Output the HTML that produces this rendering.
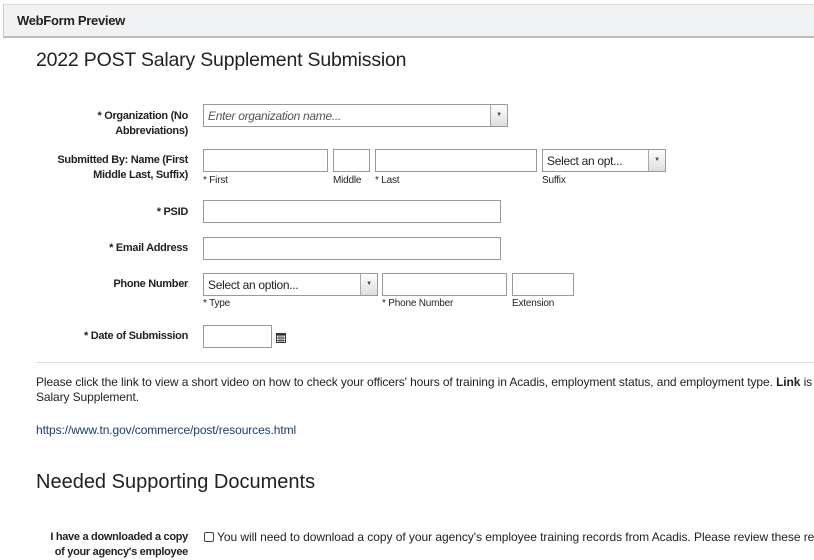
<!DOCTYPE html>
<html><head><meta charset="utf-8">
<style>
*{margin:0;padding:0;box-sizing:border-box}
body{width:814px;height:551px;overflow:hidden;background:#fff;font-family:"Liberation Sans",sans-serif;color:#222;position:relative}
.a{position:absolute;white-space:nowrap}
.hdr{position:absolute;left:3px;top:4px;width:811px;height:34px;background:#f1f2f4;border-top:1px solid #ddd;border-left:1px solid #ccc;border-bottom:2px solid #b9bcc0}
.lbl{position:absolute;font-size:11px;font-weight:bold;text-align:right;right:626px;line-height:15px;letter-spacing:-0.3px}
.in{position:absolute;border:1px solid #999;background:#fff;height:23px}
.sub{position:absolute;font-size:10px;letter-spacing:-0.2px;top:0}
.sel{position:absolute;border:1px solid #999;background:#fff;height:23px;font-size:12px;padding:4px 4px 0;letter-spacing:-0.3px}
.arr{position:absolute;right:0;top:0;width:17px;height:21px;border-left:1px solid #aaa;background:linear-gradient(#fff,#ddd);font-size:6px;text-align:center;line-height:21px;color:#444}
</style></head><body>
<div class="hdr"><span class="a" style="left:13px;top:8px;font-size:13px;font-weight:bold;letter-spacing:-0.3px">WebForm Preview</span></div>
<div class="a" style="left:36px;top:49px;font-size:19.5px;color:#222;letter-spacing:-0.2px">2022 POST Salary Supplement Submission</div>

<div class="lbl" style="top:109px">* Organization (No<br>Abbreviations)</div>
<div class="sel" style="left:203px;top:104px;width:305px;font-style:italic;color:#555">Enter organization name...<div class="arr">▼</div></div>

<div class="lbl" style="top:153px">Submitted By: Name (First<br>Middle Last, Suffix)</div>
<div class="in" style="left:203px;top:149px;width:125px"></div>
<div class="in" style="left:333px;top:149px;width:37px"></div>
<div class="in" style="left:375px;top:149px;width:162px"></div>
<div class="sel" style="left:542px;top:149px;width:124px">Select an opt...<div class="arr">▼</div></div>
<div class="sub" style="left:203px;top:175px">* First</div>
<div class="sub" style="left:333px;top:175px">Middle</div>
<div class="sub" style="left:375px;top:175px">* Last</div>
<div class="sub" style="left:542px;top:175px">Suffix</div>

<div class="lbl" style="top:205px">* PSID</div>
<div class="in" style="left:203px;top:200px;width:298px"></div>
<div class="lbl" style="top:241px">* Email Address</div>
<div class="in" style="left:203px;top:237px;width:298px"></div>

<div class="lbl" style="top:277px">Phone Number</div>
<div class="sel" style="left:203px;top:273px;width:175px">Select an option...<div class="arr">▼</div></div>
<div class="in" style="left:382px;top:273px;width:125px"></div>
<div class="in" style="left:512px;top:273px;width:62px"></div>
<div class="sub" style="left:203px;top:298px">* Type</div>
<div class="sub" style="left:382px;top:298px">* Phone Number</div>
<div class="sub" style="left:512px;top:298px">Extension</div>

<div class="lbl" style="top:329px">* Date of Submission</div>
<div class="in" style="left:203px;top:325px;width:69px"></div>
<svg class="a" style="left:276px;top:332px" width="10" height="11" viewBox="0 0 10 11"><rect x="0.5" y="1.5" width="9" height="9" fill="none" stroke="#333"/><rect x="0" y="1" width="10" height="2.5" fill="#333"/><path d="M0 6h10M0 8.5h10M3 3v8M5 3v8M7 3v8" stroke="#333" stroke-width="0.8"/></svg>

<div class="a" style="left:36px;top:362px;width:778px;height:1px;background:#ddd"></div>
<div class="a" style="left:36px;top:375px;font-size:12px;line-height:15px;letter-spacing:-0.1px">Please click the link to view a short video on how to check your officers' hours of training in Acadis, employment status, and employment type. <b>Link</b> is lo<br>Salary Supplement.</div>
<div class="a" style="left:36px;top:423px;font-size:12px;color:#1a3d6e;letter-spacing:-0.1px">https://www.tn.gov/commerce/post/resources.html</div>

<div class="a" style="left:36px;top:471px;font-size:20px;letter-spacing:0">Needed Supporting Documents</div>

<div class="lbl" style="top:530px">I have a downloaded a copy<br>of your agency's employee</div>
<div class="a" style="left:204px;top:532px;width:10px;height:10px;border:1px solid #444;border-radius:2px"></div>
<div class="a" style="left:217px;top:530px;font-size:12px;letter-spacing:-0.05px">You will need to download a copy of your agency's employee training records from Acadis. Please review these recor</div>
</body></html>
